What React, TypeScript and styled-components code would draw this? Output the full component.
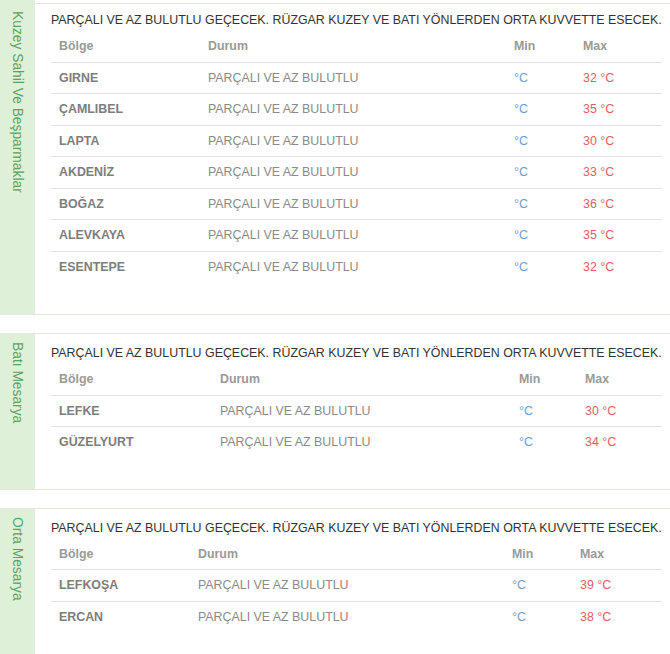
import React from "react";
import styled, { createGlobalStyle } from "styled-components";

const GlobalStyle = createGlobalStyle`
  html, body { margin: 0; padding: 0; background: #ffffff; }
  body { font-family: "Liberation Sans", Arial, sans-serif; }
`;

const Page = styled.div`
  width: 670px;
  display: flex;
  flex-direction: column;
  gap: 18px;
  overflow: hidden;
`;

const Panel = styled.section<{ $first?: boolean }>`
  display: flex;
  flex-direction: row;
  border-top: ${(p) => (p.$first ? "none" : "1px solid #e6e6dc")};
  border-bottom: 1px solid #e6e6dc;
`;

const Sidebar = styled.div<{ $first?: boolean }>`
  flex: 0 0 35px;
  width: 35px;
  background: #dff0d8;
  display: flex;
  justify-content: center;
  padding-top: ${(p) => (p.$first ? "11px" : "8px")};
  box-sizing: border-box;
`;

const SideLabel = styled.span`
  writing-mode: vertical-rl;
  font-size: 13.8px;
  line-height: 15px;
  color: #5aa25e;
  white-space: nowrap;
`;

const Content = styled.div<{ $first?: boolean }>`
  flex: 1;
  min-width: 0;
  padding: ${(p) => (p.$first ? "8px 8px 32px 16px" : "11px 8px 31px 16px")};
  margin-top: ${(p) => (p.$first ? "3px" : "0")};
  border-top: ${(p) => (p.$first ? "1px solid #e6e6dc" : "none")};
`;

const Title = styled.p`
  margin: 0 0 2px;
  font-size: 12.4px;
  line-height: 17px;
  color: #333333;
  white-space: nowrap;
`;

const Table = styled.table`
  width: 100%;
  table-layout: fixed;
  border-collapse: collapse;
  font-size: 12.4px;
`;

const Col = styled.col<{ $w: number }>`
  width: ${(p) => p.$w}px;
`;

const Th = styled.th`
  text-align: left;
  font-weight: bold;
  color: #9a9a9a;
  padding: 7px 8px;
  line-height: 16.5px;
`;

const Td = styled.td<{ $tone?: "name" | "text" | "min" | "max" }>`
  padding: 7px 8px;
  line-height: 16.5px;
  border-top: 1px solid #e2e2e2;
  white-space: nowrap;
  font-weight: ${(p) => (p.$tone === "name" ? "bold" : "normal")};
  color: ${(p) =>
    p.$tone === "name"
      ? "#7d7d7d"
      : p.$tone === "min"
      ? "#6a9fd0"
      : p.$tone === "max"
      ? "#da6262"
      : "#8a8a8a"};
`;

type Region = {
  label: string;
  cols: number[];
  rows: [string, string][];
};

const TITLE =
  "PARÇALI VE AZ BULUTLU GEÇECEK. RÜZGAR KUZEY VE BATI YÖNLERDEN ORTA KUVVETTE ESECEK.";
const STATE = "PARÇALI VE AZ BULUTLU";

const regions: Region[] = [
  {
    label: "Kuzey Sahil Ve Beşparmaklar",
    cols: [149, 306, 69, 87],
    rows: [
      ["GIRNE", "32"],
      ["ÇAMLIBEL", "35"],
      ["LAPTA", "30"],
      ["AKDENİZ", "33"],
      ["BOĞAZ", "36"],
      ["ALEVKAYA", "35"],
      ["ESENTEPE", "32"],
    ],
  },
  {
    label: "Batı Mesarya",
    cols: [161, 299, 66, 85],
    rows: [
      ["LEFKE", "30"],
      ["GÜZELYURT", "34"],
    ],
  },
  {
    label: "Orta Mesarya",
    cols: [139, 314, 68, 90],
    rows: [
      ["LEFKOŞA", "39"],
      ["ERCAN", "38"],
    ],
  },
];

function RegionPanel({ region, first }: { region: Region; first: boolean }) {
  return (
    <Panel $first={first}>
      <Sidebar $first={first}>
        <SideLabel>{region.label}</SideLabel>
      </Sidebar>
      <Content $first={first}>
        <Title>{TITLE}</Title>
        <Table>
          <colgroup>
            {region.cols.map((w, i) => (
              <Col key={i} $w={w} />
            ))}
          </colgroup>
          <thead>
            <tr>
              <Th>Bölge</Th>
              <Th>Durum</Th>
              <Th>Min</Th>
              <Th>Max</Th>
            </tr>
          </thead>
          <tbody>
            {region.rows.map(([name, max]) => (
              <tr key={name}>
                <Td $tone="name">{name}</Td>
                <Td $tone="text">{STATE}</Td>
                <Td $tone="min">°C</Td>
                <Td $tone="max">{max} °C</Td>
              </tr>
            ))}
          </tbody>
        </Table>
      </Content>
    </Panel>
  );
}

export default function App() {
  return (
    <>
      <GlobalStyle />
      <Page>
        {regions.map((r, i) => (
          <RegionPanel key={r.label} region={r} first={i === 0} />
        ))}
      </Page>
    </>
  );
}
